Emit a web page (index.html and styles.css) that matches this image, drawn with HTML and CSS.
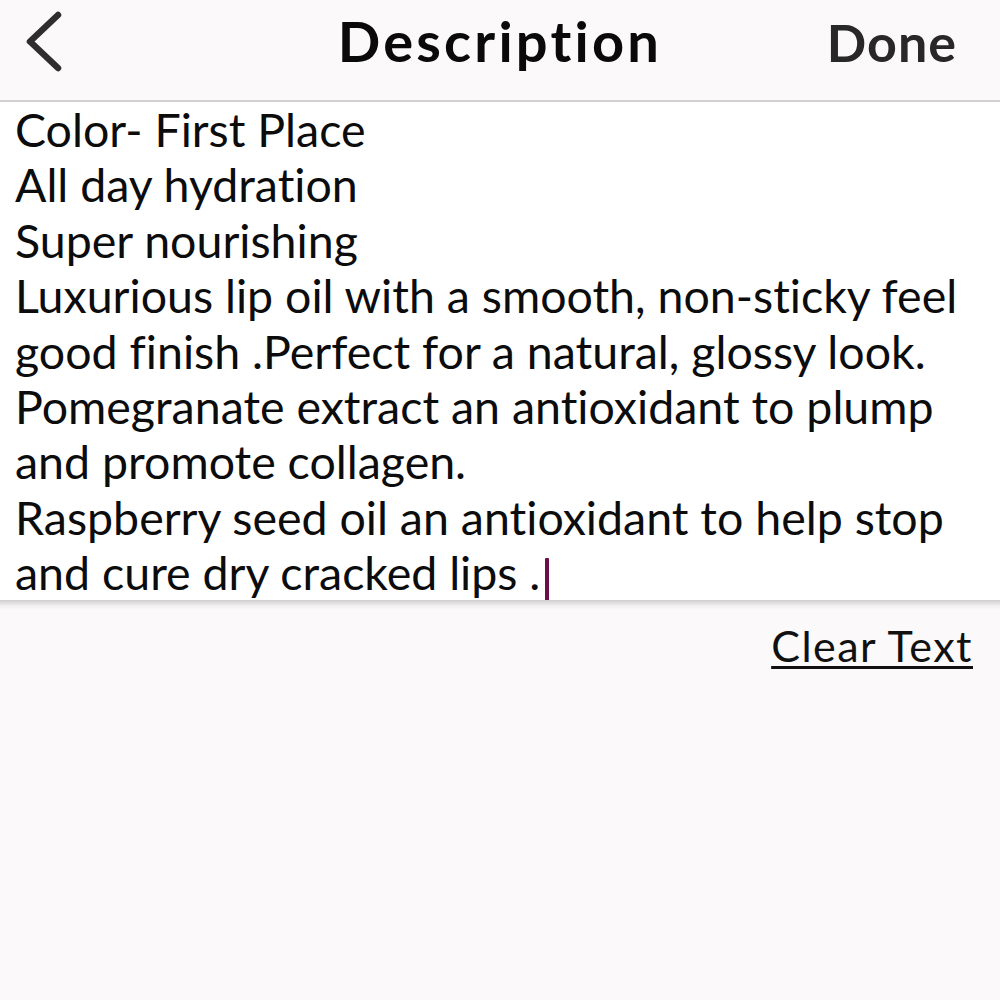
FILE: index.html
```html
<!DOCTYPE html>
<html>
<head>
<meta charset="utf-8">
<link rel="stylesheet" href="styles.css">
</head>
<body>
<div class="screen">
  <header class="navbar">
    <button class="back" aria-label="Back">
      <svg width="40" height="100" viewBox="0 0 40 100"><path d="M35 15 L7 41.5 L35 68" fill="none" stroke="#2e2e2e" stroke-width="6.5" stroke-linecap="round" stroke-linejoin="round"/></svg>
    </button>
    <h1 class="title">Description</h1>
    <button class="done">Done</button>
  </header>
  <section class="editor">
    <div class="line">Color- First Place</div>
    <div class="line">All day hydration</div>
    <div class="line">Super nourishing</div>
    <div class="line">Luxurious lip oil with a smooth, non-sticky feel</div>
    <div class="line">good finish .Perfect for a natural, glossy look.</div>
    <div class="line">Pomegranate extract an antioxidant to plump</div>
    <div class="line">and promote collagen.</div>
    <div class="line">Raspberry seed oil an antioxidant to help stop</div>
    <div class="line">and cure dry cracked lips .<span class="caret"></span></div>
  </section>
  <div class="footer">
    <a class="clear" href="#">Clear Text</a>
  </div>
</div>
</body>
</html>
```
FILE: styles.css
```css
* { box-sizing: border-box; }
html, body { margin: 0; padding: 0; }
body {
  width: 1000px;
  height: 1000px;
  background: #fbf9fa;
  font-family: "Lato", "Noto Sans", sans-serif;
  font-variant-ligatures: none;
  color: #111;
  overflow: hidden;
}
.screen { display: flex; flex-direction: column; height: 1000px; }
.navbar {
  height: 102px;
  flex: none;
  background: #fbf9fa;
  border-bottom: 2px solid #d2d0d1;
  display: flex;
  align-items: stretch;
  padding: 0 43px 0 23px;
}
.back {
  background: none; border: 0; padding: 0; margin: 0;
  width: 40px; height: 100px; cursor: pointer;
}
.back svg { display: block; }
.title {
  flex: 1;
  margin: 0;
  align-self: center;
  text-align: center;
  font-size: 56px;
  line-height: 1;
  font-weight: 700;
  color: #0a0a0a;
  letter-spacing: 3.2px;
  padding: 0 0 18px 110px;
}
.done {
  align-self: center;
  background: none; border: 0; padding: 0 0 16px 0; margin: 0;
  font-family: inherit;
  font-size: 52px;
  line-height: 1;
  font-weight: 700;
  letter-spacing: 1px;
  color: #282828;
}
.editor {
  flex: none;
  background: #ffffff;
  padding: 0 15px;
  height: 498px;
  overflow: hidden;
}
.line {
  font-size: 46.5px;
  line-height: 55.4px;
  font-weight: 400;
  color: #0c0c0c;
  white-space: nowrap;
}
.caret {
  display: inline-block;
  width: 4px;
  height: 46px;
  background: #6a0f47;
  vertical-align: -14px;
  margin-left: 5px;
  border-radius: 1px;
}
.footer {
  flex: 1;
  background: linear-gradient(#cfcdce 0, #f2f0f1 6px, #fbf9fa 10px);
  display: flex;
  justify-content: flex-end;
  padding: 20px 27px 0 0;
  align-items: flex-start;
}
.clear {
  font-size: 43px;
  line-height: 1.2;
  color: #111;
  font-weight: 400;
  letter-spacing: 1.5px;
  text-decoration: underline;
  text-underline-offset: 4px;
  text-decoration-thickness: 2.5px;
}
```
